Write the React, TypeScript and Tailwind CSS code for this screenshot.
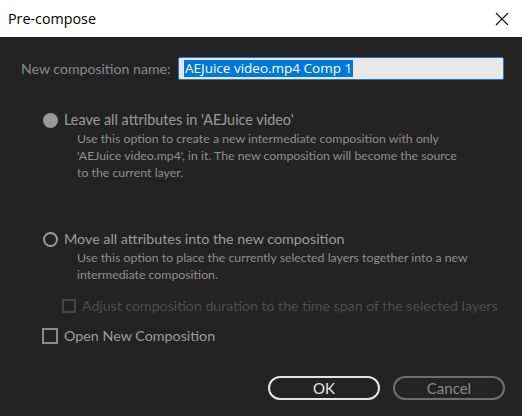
import React from "react";

const font = { fontFamily: '"Lato", "Open Sans", sans-serif' };

const Radio = ({ filled }: { filled?: boolean }) => (
  <span
    className={
      filled
        ? "w-[15px] h-[15px] rounded-full bg-[#9a9a9a] shrink-0"
        : "w-[15px] h-[15px] rounded-full border-2 border-[#9a9a9a] shrink-0"
    }
  />
);

export default function App() {
  return (
    <div className="w-[522px] h-[416px] flex flex-col bg-[#232323] overflow-hidden" style={font}>
      {/* Title bar */}
      <div className="h-[37px] bg-white flex items-center justify-between pl-2 pr-[12px] shrink-0">
        <span className="text-[14.3px] text-black" style={{ fontFamily: '"Open Sans", "Noto Sans", sans-serif' }}>
          Pre-compose
        </span>
        <svg width="14" height="14" viewBox="0 0 14 14" className="mr-[1px]">
          <path d="M1 1 L13 13 M13 1 L1 13" stroke="#111" strokeWidth="1.1" />
        </svg>
      </div>

      {/* Name row */}
      <div className="flex items-center mt-[20px] pl-[21px]">
        <span className="text-[14.1px] text-[#8a8a8a] w-[157px] whitespace-nowrap">New composition name:</span>
        <div className="w-[326px] h-[23px] bg-[#e8e8e8] border border-[#1e78d4] rounded-[2px] flex items-center pl-[5px]">
          <span className="bg-[#0078d7] text-white text-[13.5px] leading-[17px] px-[1px]" style={{ fontFamily: '"Open Sans", sans-serif' }}>
            AEJuice video.mp4 Comp 1
          </span>
        </div>
      </div>

      {/* Option 1 */}
      <div className="mt-[32px] pl-[43px]">
        <div className="flex items-center gap-[6px] h-[16px]">
          <Radio filled />
          <span className="text-[14.4px] text-[#9c9c9c] whitespace-nowrap">Leave all attributes in 'AEJuice video'</span>
        </div>
        <div className="pl-[34px] mt-[2px] text-[12.3px] leading-[17px] text-[#8f8f8f] whitespace-nowrap">
          <div>Use this option to create a new intermediate composition with only</div>
          <div>'AEJuice video.mp4', in it. The new composition will become the source</div>
          <div>to the current layer.</div>
        </div>
      </div>

      {/* Option 2 */}
      <div className="mt-[50px] pl-[43px]">
        <div className="flex items-center gap-[6px] h-[16px]">
          <Radio />
          <span className="text-[14.3px] text-[#9c9c9c] whitespace-nowrap">Move all attributes into the new composition</span>
        </div>
        <div className="pl-[34px] mt-[2px] text-[12.3px] leading-[17px] text-[#8f8f8f] whitespace-nowrap">
          <div>Use this option to place the currently selected layers together into a new</div>
          <div>intermediate composition.</div>
        </div>
      </div>

      {/* Disabled checkbox */}
      <div className="flex items-center gap-[6px] mt-[15px] pl-[62px] h-[16px]">
        <span className="w-[14px] h-[14px] border-2 border-[#464646] shrink-0" />
        <span className="text-[14.15px] text-[#4f4f4f] whitespace-nowrap">
          Adjust composition duration to the time span of the selected layers
        </span>
      </div>

      {/* Open New Composition */}
      <div className="flex items-center gap-[6px] mt-[14px] pl-[42px] h-[16px]">
        <span className="w-[16px] h-[16px] border-2 border-[#8a8a8a] shrink-0" />
        <span className="text-[14.3px] text-[#9c9c9c] whitespace-nowrap">Open New Composition</span>
      </div>

      {/* Buttons */}
      <div className="flex justify-end gap-[13px] mt-[32px] pr-[17px]">
        <button className="w-[112px] h-[24px] rounded-full border-2 border-[#e6e6e6] text-[15px] text-[#e6e6e6] flex items-center justify-center">
          OK
        </button>
        <button className="w-[112px] h-[24px] rounded-full border-2 border-[#6e6e6e] text-[15px] text-[#8a8a8a] flex items-center justify-center">
          Cancel
        </button>
      </div>
    </div>
  );
}
